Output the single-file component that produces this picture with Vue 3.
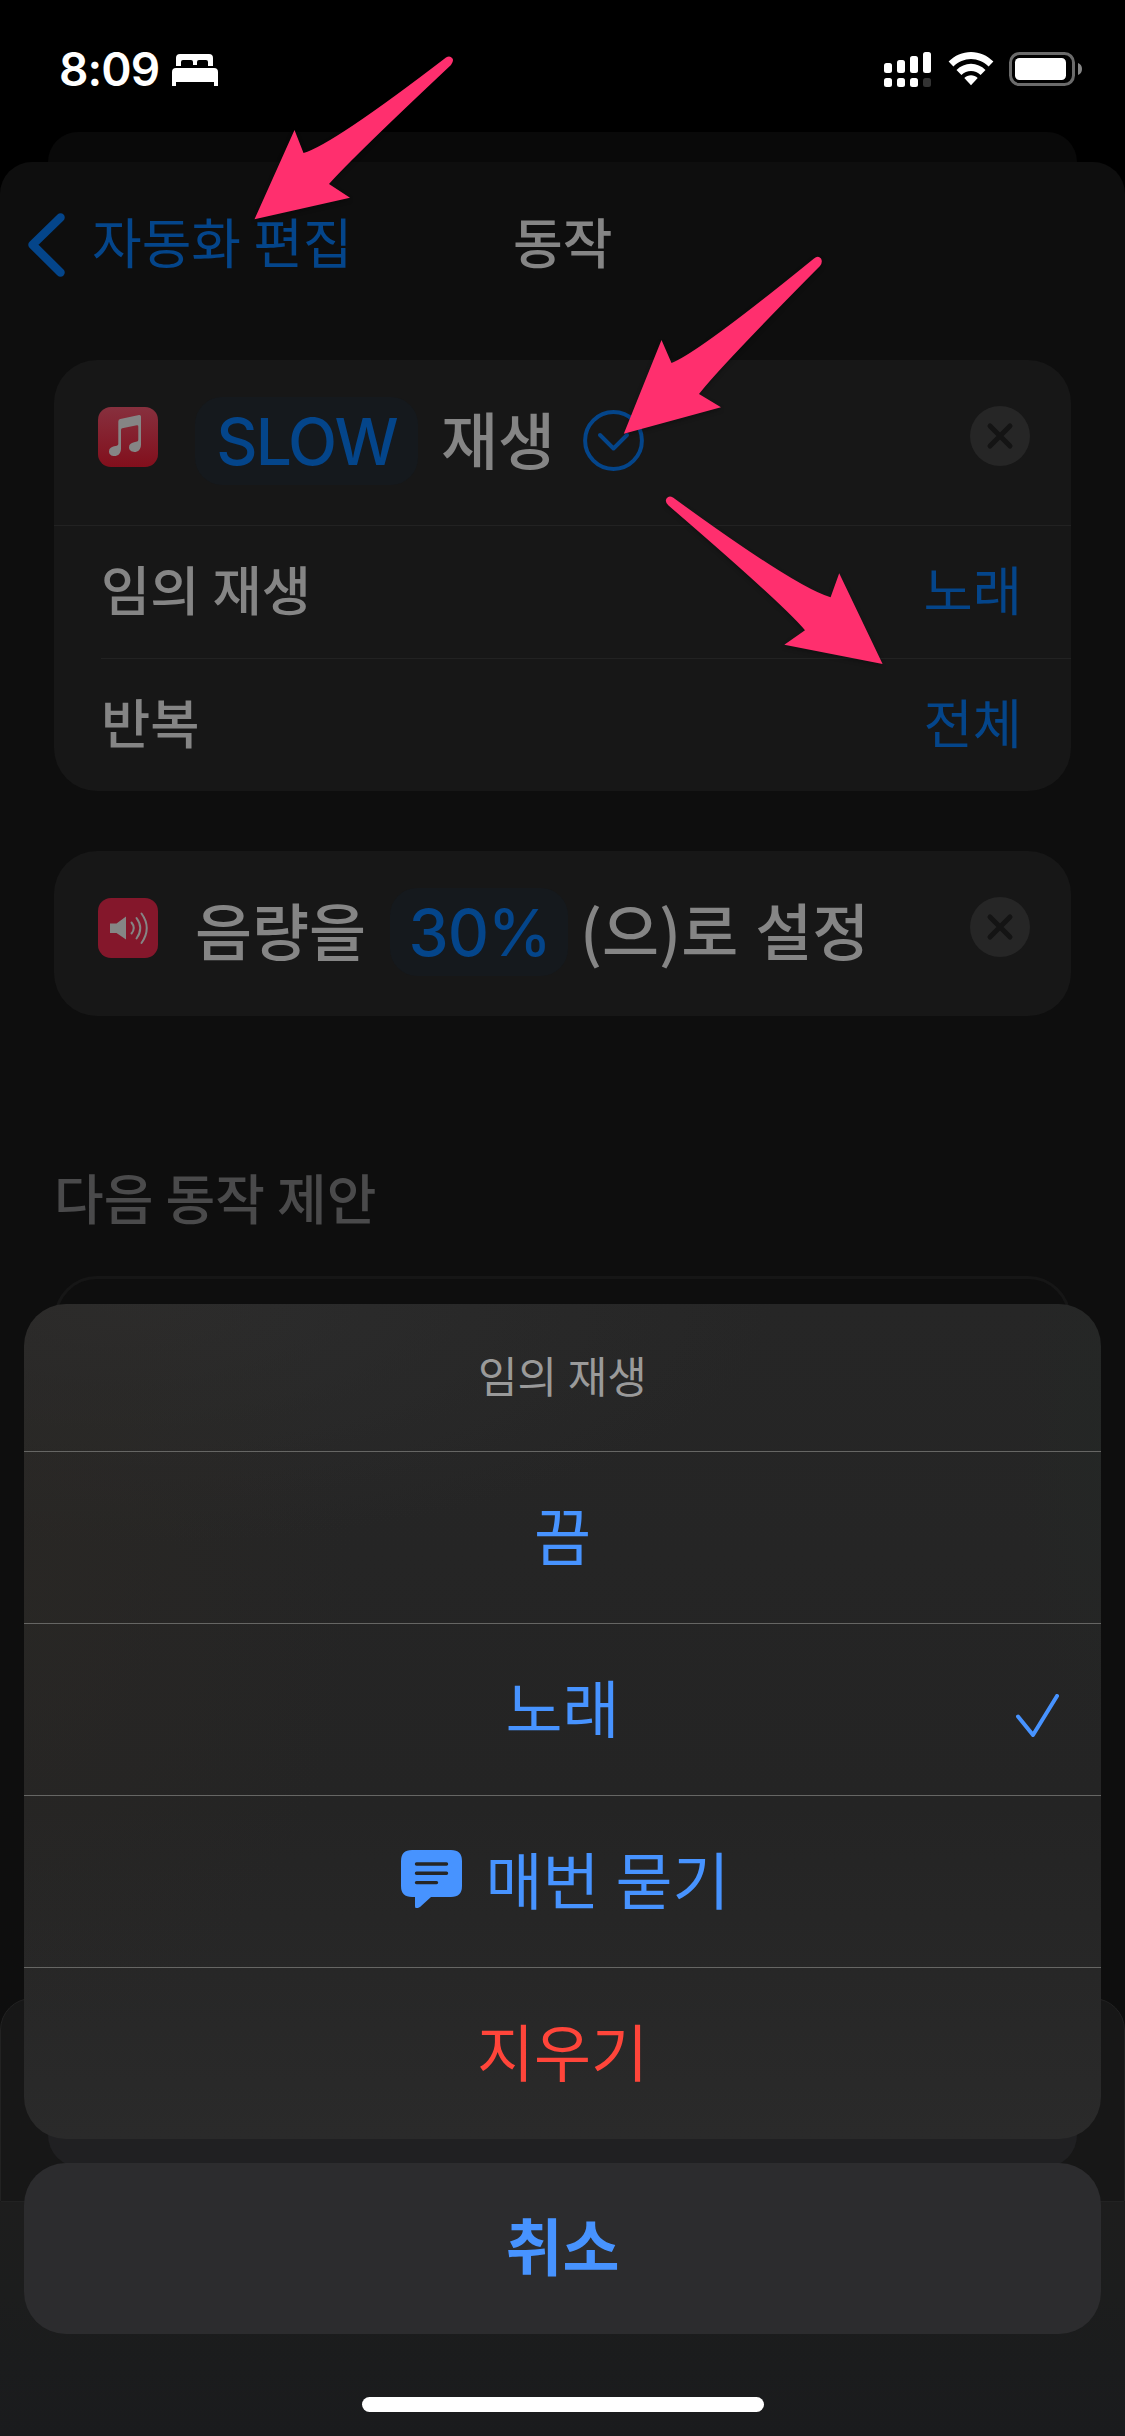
<script setup>
const options = [
  { label: '끔' },
  { label: '노래', checked: true },
  { label: '매번 묻기', icon: true },
  { label: '지우기', danger: true },
]
const settings = [
  { name: '임의 재생', value: '노래' },
  { name: '반복', value: '전체' },
]
</script>

<template>
  <div class="screen">
    <header class="status">
      <span class="time">8:09</span>
      <svg class="bed" width="46" height="32" viewBox="0 0 46 32" fill="#fff">
        <path d="M4 12V4a4 4 0 0 1 4-4h29a4 4 0 0 1 4 4v8h-5V8a2 2 0 0 0-2-2H27a2 2 0 0 0-2 2v3h-4V8a2 2 0 0 0-2-2h-8a2 2 0 0 0-2 2v4z" />
        <path d="M0 31V18a4 4 0 0 1 4-4h38a4 4 0 0 1 4 4v14h-4v-4H4v4H0z" />
      </svg>
      <div class="status-right">
        <svg width="47" height="35" viewBox="0 0 47 35" fill="#fff">
          <rect x="0" y="11" width="8" height="10" rx="2.5" />
          <rect x="13" y="8" width="8" height="13" rx="2.5" />
          <rect x="26" y="4" width="8" height="17" rx="2.5" />
          <rect x="39" y="0" width="8" height="21" rx="2.5" />
          <rect x="0" y="26" width="8" height="9" rx="2.5" />
          <rect x="13" y="26" width="8" height="9" rx="2.5" />
          <rect x="26" y="26" width="8" height="9" rx="2.5" />
          <rect x="39" y="26" width="8" height="9" rx="2.5" fill="#333" />
        </svg>
        <svg class="wifi" width="46" height="34" viewBox="0 0 46 34" fill="#fff">
          <path d="M0.6 9.6C6.8 3.4 14.500 0 23 0s16.200 3.400 22.400 9.600L40.600 14.600C35.700 9.900 29.600 7.100 23 7.100S10.300 9.900 5.400 14.600z" />
          <path d="M8.500 18C12.500 14.100 17.500 11.800 23 11.800s10.500 2.300 14.500 6.200l-4.900 5C29.900 20.500 26.600 19 23 19s-6.900 1.500-9.600 4z" />
          <path d="M16.300 26c1.900-1.800 4.200-2.800 6.700-2.800s4.800 1 6.700 2.800L23 33.200z" />
        </svg>
        <svg width="73" height="34" viewBox="0 0 73 34">
          <rect x="1.500" y="1.500" width="63" height="31" rx="9" fill="none" stroke="#6b6b6b" stroke-width="3" />
          <rect x="6" y="6" width="51" height="22" rx="4.500" fill="#fff" />
          <path d="M69 11a6.500 6.500 0 0 1 0 12z" fill="#868686" />
        </svg>
      </div>
    </header>

    <div class="sheet-behind"></div>

    <main class="editor">
      <nav class="nav">
        <svg width="38" height="64" viewBox="0 0 38 64" fill="none" stroke="#04458a" stroke-width="8.500" stroke-linecap="round" stroke-linejoin="round">
          <path d="M33.500 4.500L5.500 31.700L33.500 59.500" />
        </svg>
        <span class="back">자동화 편집</span>
        <span class="title">동작</span>
      </nav>

      <section class="card">
        <div class="action">
          <svg class="app" width="60" height="60" viewBox="0 0 60 60">
            <defs>
              <linearGradient id="music" x1="0" y1="0" x2="0" y2="1">
                <stop offset="0" stop-color="#87303e" />
                <stop offset="1" stop-color="#820f1c" />
              </linearGradient>
            </defs>
            <rect width="60" height="60" rx="13" fill="url(#music)" />
            <path d="M20.300 14.500Q20.300 12.400 22.300 12L41 8Q43 7.700 43 9.600V37.500C43 42.500 40 45 36.500 45C33.300 45 31 43 31 40.300C31 37.300 33 35.800 36 35.200L39 34.600Q40.300 34.300 40.300 32.800V19.600Q40.300 18 38.800 18.300L24.300 21.200Q23 21.500 23 23V41.500C23 46.500 20 49 16.500 49C13.300 49 11 47.200 11 44.400C11 41.400 13.200 39.900 16 39.300L18.800 38.700Q20.300 38.400 20.300 37z" fill="#858585" />
          </svg>
          <span class="token slow">SLOW</span>
          <span class="phrase">재생</span>
          <svg class="disclose" width="61" height="61" viewBox="0 0 61 61" fill="none" stroke="#04458a" stroke-width="4" stroke-linecap="round" stroke-linejoin="round">
            <circle cx="30.500" cy="30.500" r="28.400" />
            <path d="M17 25L30.500 38.500L44 25" />
          </svg>
          <svg class="remove" width="60" height="60" viewBox="0 0 60 60">
            <circle cx="30" cy="30" r="30" fill="#262626" />
            <path d="M20 20L40 40M40 20L20 40" stroke="#141414" stroke-width="5" stroke-linecap="round" />
          </svg>
        </div>
        <div v-for="s in settings" :key="s.name" class="setting">
          <span>{{ s.name }}</span>
          <span class="value">{{ s.value }}</span>
        </div>
      </section>

      <section class="card second">
        <div class="action">
          <svg class="app" width="60" height="60" viewBox="0 0 60 60">
            <rect width="60" height="60" rx="13" fill="#84172b" />
            <path d="M12 25.500h6.500L28 18.500V41.500L18.500 35H12z" fill="#858585" />
            <g fill="none" stroke="#858585" stroke-width="2" stroke-linecap="round">
              <path d="M33.500 24.500Q38 30 33.500 35.500" />
              <path d="M38.500 20Q46 30 38.500 40.500" />
              <path d="M43.500 15.500Q54 30 43.500 45" />
            </g>
          </svg>
          <span class="phrase lead">음량을</span>
          <span class="token volume">30%</span>
          <span class="phrase tail">(으)로 설정</span>
          <svg class="remove" width="60" height="60" viewBox="0 0 60 60">
            <circle cx="30" cy="30" r="30" fill="#262626" />
            <path d="M20 20L40 40M40 20L20 40" stroke="#141414" stroke-width="5" stroke-linecap="round" />
          </svg>
        </div>
      </section>

      <h2 class="suggest">다음 동작 제안</h2>
      <div class="outline"></div>
    </main>

    <div class="drawer"><div class="search"></div></div>
    <div class="toolbar"></div>

    <div class="modal">
      <div class="choices">
        <div class="heading">임의 재생</div>
        <div v-for="o in options" :key="o.label" class="choice" :class="{ danger: o.danger }">
          <svg v-if="o.icon" class="bubble" width="61" height="58" viewBox="0 0 61 58">
            <path d="M11 0H50Q61 0 61 11V36Q61 47 50 47H30L19 57Q14 60 14 56V47H11Q0 47 0 36V11Q0 0 11 0z" fill="#4793ff" />
            <path d="M15.500 14H45.500M15.500 23.300H45.500M15.500 32.600H35.500" stroke="#262626" stroke-width="3.400" stroke-linecap="round" />
          </svg>
          <span>{{ o.label }}</span>
          <svg v-if="o.checked" class="check" width="43" height="44" viewBox="0 0 43 44" fill="none" stroke="#4793ff" stroke-width="4" stroke-linecap="round" stroke-linejoin="round">
            <path d="M2 22.500L17 41L41 2" />
          </svg>
        </div>
      </div>
      <div class="cancel">취소</div>
      <div class="home"></div>
    </div>

    <svg class="arrows" width="1125" height="700" viewBox="0 0 1125 700" fill="#ff2f6e">
      <path d="M254.500 219.300L294.500 130L303.500 153Q332 145 446 57.500Q450 55 452.500 58.500Q454 61 451 65Q352 158 329 184L350 197.700z" />
      <path d="M623.800 433.700L661.500 340L671.500 363Q698 353 814 258.500Q818 255 821 258.500Q823 262 820 266Q718 369 699 394L721 407.300z" />
      <path d="M882.600 664L839.200 573.300L830.600 597.300Q797 588 673 497.500Q669 495 666.500 498.500Q664.500 502 668.500 505.500Q784 605 805 630.300L784.300 644.700z" />
    </svg>
  </div>
</template>

<style>
html,
body {
  margin: 0;
  background: #000;
}
</style>

<style scoped>
.screen {
  position: relative;
  width: 1125px;
  height: 2436px;
  overflow: hidden;
  display: flex;
  flex-direction: column;
  background: #000;
  color: #858585;
  font-family: 'Noto Sans CJK KR', 'Noto Sans', sans-serif;
}
svg {
  display: block;
  flex: none;
}
span {
  white-space: nowrap;
}
.status {
  box-sizing: border-box;
  height: 132px;
  padding: 52px 43px 0 59px;
  display: flex;
  align-items: flex-start;
  flex: none;
}
.time {
  width: 113px;
  color: #fff;
  font: 600 46px/34px Inter, sans-serif;
  letter-spacing: -0.9px;
}
.bed {
  margin-top: 2px;
}
.status-right {
  margin-left: auto;
  display: flex;
}
.wifi {
  margin: 0 15px 0 17px;
}
.sheet-behind {
  height: 30px;
  flex: none;
  margin: 0 48px;
  border-radius: 30px 30px 0 0;
  background: #090909;
}
.editor {
  flex: none;
  height: 1876px;
  margin-bottom: -40px;
  border-radius: 32px 32px 0 0;
  background: #0e0e0e;
  display: flex;
  flex-direction: column;
}
.nav {
  height: 198px;
  box-sizing: border-box;
  padding: 51px 28px 0 27px;
  display: grid;
  grid-template-columns: 65px 421px 97px;
  align-items: start;
  font-size: 54px;
  line-height: 56px;
}
.back {
  color: #04458a;
}
.title {
  font-weight: 500;
}
.card {
  margin: 0 54px;
  border-radius: 43px;
  background: #171717;
  overflow: hidden;
}
.second {
  margin-top: 60px;
}
.action {
  box-sizing: border-box;
  height: 165px;
  padding: 37px 41px 0 44px;
  display: flex;
  align-items: flex-start;
  font-size: 62px;
}
.app {
  margin-top: 10px;
}
.token {
  box-sizing: border-box;
  height: 88px;
  border-radius: 27px;
  background: #15191d;
  color: #04458a;
  font-family: Inter, sans-serif;
  font-size: 64px;
  font-weight: 500;
  line-height: 89px;
  text-align: center;
}
.slow {
  width: 223px;
  margin-left: 37px;
  letter-spacing: -2px;
}
.volume {
  width: 178px;
  margin-left: 24px;
  padding-left: 1px;
  letter-spacing: -1px;
}
.phrase {
  width: 114px;
  margin-left: 23px;
  line-height: 82px;
  word-spacing: 3px;
  font-weight: 500;
}
.phrase.lead {
  width: 171px;
  margin-left: 37px;
}
.phrase.tail {
  width: 290px;
  margin-left: 12px;
}
.disclose {
  margin: 13px 0 0 28px;
}
.remove {
  margin: 9px 0 0 auto;
}
.setting {
  box-sizing: border-box;
  height: 133px;
  margin-left: 47px;
  padding-right: 49px;
  border-top: 1px solid #222;
  display: flex;
  justify-content: space-between;
  font-size: 53.500px;
  line-height: 123px;
  word-spacing: 1px;
}
.setting:nth-child(2) {
  margin-left: 0;
  padding-left: 47px;
}
.setting > span:first-child {
  font-weight: 500;
}
.value {
  color: #04458a;
}
.suggest {
  margin: 141px 54px 0;
  font-size: 54px;
  line-height: 80px;
  font-weight: 500;
  color: #4a4a4b;
}
.outline {
  box-sizing: border-box;
  height: 300px;
  margin: 39px 54px 0;
  border: 3px solid #161616;
  border-radius: 43px;
}
.drawer {
  box-sizing: border-box;
  flex: none;
  height: 204px;
  border: 1px solid #222;
  border-radius: 32px 32px 0 0;
  background: #171717;
  padding: 0 47px;
}
.search {
  height: 168px;
  border-radius: 32px;
  background: #202022;
}
.toolbar {
  flex: none;
  height: 235px;
  background: linear-gradient(#1d1d1d, #1c1d1d 40%, #1a1b1d);
}
.modal {
  position: absolute;
  inset: 1304px 24px 0;
  display: flex;
  flex-direction: column;
  align-items: center;
}
.choices {
  width: 100%;
  height: 835px;
  border-radius: 42px;
  overflow: hidden;
  background:
    radial-gradient(ellipse 330px 480px at 0 270px, rgba(43, 40, 36, 0.6), transparent),
    radial-gradient(ellipse 80px 300px at 1077px 140px, rgba(36, 40, 38, 0.6), transparent),
    radial-gradient(ellipse 650px 240px at 100px 0, rgba(46, 46, 46, 0.8), transparent),
    linear-gradient(#262626, #242424 60%, #2a2a2a);
}
.heading {
  height: 147px;
  text-align: center;
  font-size: 43px;
  line-height: 141px;
  word-spacing: 1px;
  color: #9a9a9a;
}
.choice {
  position: relative;
  box-sizing: border-box;
  height: 172px;
  border-top: 1px solid #666664;
  display: flex;
  align-items: center;
  justify-content: center;
  font-size: 62px;
  line-height: 160px;
  word-spacing: 2px;
  color: #4793ff;
}
.choice > span {
  margin-top: -8px;
}
.bubble {
  margin: -6px 23px 0 6px;
}
.check {
  position: absolute;
  right: 42px;
  top: 70px;
}
.danger {
  color: #ff453a;
}
.cancel {
  width: 100%;
  height: 171px;
  margin-top: 24px;
  border-radius: 42px;
  background: #2c2c2e;
  color: #4793ff;
  font-size: 62px;
  font-weight: 700;
  line-height: 163px;
  text-align: center;
}
.home {
  width: 402px;
  height: 15px;
  margin-top: 63px;
  border-radius: 8px;
  background: #fff;
}
.arrows {
  position: absolute;
  left: 0;
  top: 0;
  filter: drop-shadow(0 2px 2px rgba(0, 0, 0, 0.3));
}
</style>
